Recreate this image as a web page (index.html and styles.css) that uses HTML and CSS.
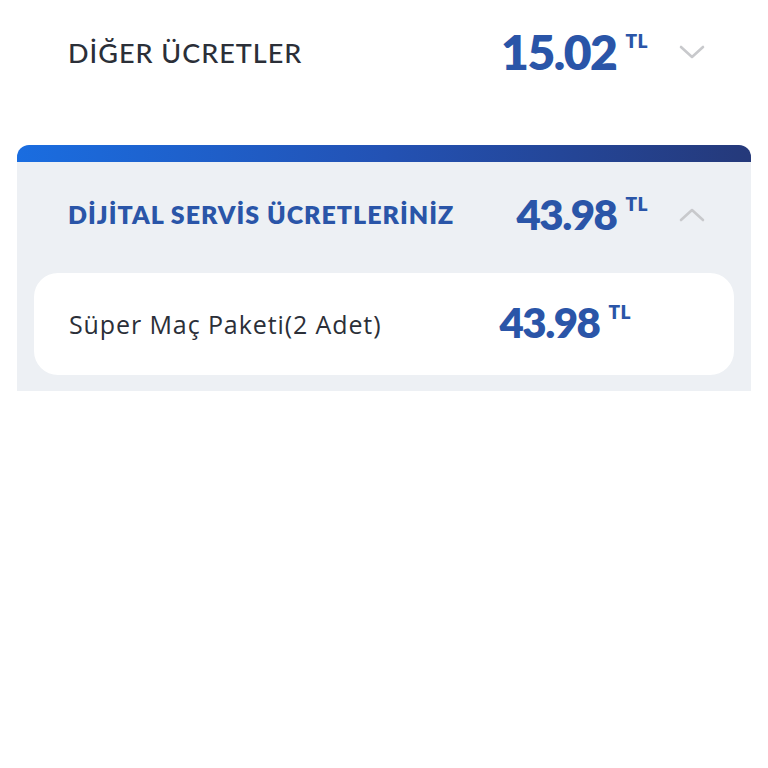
FILE: index.html
```html
<!DOCTYPE html>
<html lang="tr">
<head>
<meta charset="utf-8">
<link rel="stylesheet" href="styles.css">
</head>
<body>
<div class="page">
  <div class="row top-row">
    <div class="label">DİĞER ÜCRETLER</div>
    <div class="amount big"><span class="num">15.02</span><span class="cur">TL</span></div>
    <div class="chev">
      <svg width="26" height="14" viewBox="0 0 26 14"><path d="M2 2 L13 12 L24 2" fill="none" stroke="#c8c9cc" stroke-width="2.6" stroke-linecap="round" stroke-linejoin="round"/></svg>
    </div>
  </div>

  <div class="card">
    <div class="card-bar"></div>
    <div class="card-body">
      <div class="row card-head">
        <div class="label head-label">DİJİTAL SERVİS ÜCRETLERİNİZ</div>
        <div class="amount mid"><span class="num">43.98</span><span class="cur">TL</span></div>
        <div class="chev">
          <svg width="26" height="14" viewBox="0 0 26 14"><path d="M2 12 L13 2 L24 12" fill="none" stroke="#c8c9cc" stroke-width="2.6" stroke-linecap="round" stroke-linejoin="round"/></svg>
        </div>
      </div>
      <div class="item">
        <div class="item-label">Süper Maç Paketi(2 Adet)</div>
        <div class="amount mid"><span class="num">43.98</span><span class="cur">TL</span></div>
      </div>
    </div>
  </div>
</div>
</body>
</html>
```

FILE: styles.css
```css
* { box-sizing: border-box; }
html, body { margin: 0; padding: 0; background: #ffffff; }
body { font-family: "Lato", "Noto Sans", sans-serif; color: #2b2f38; }

.page { padding: 0 17px; }

.row { display: flex; align-items: center; }

.top-row { height: 104px; padding-left: 51px; }

.label { flex: 1; font-size: 27px; letter-spacing: 1px; color: #2b2f38; font-weight: 500; }

.amount { display: flex; align-items: flex-start; color: #2a55a8; font-weight: 800; }
.amount .num { letter-spacing: -1.5px; line-height: 1; }
.amount .cur { font-size: 19px; font-weight: 800; margin-left: 9px; letter-spacing: 0.5px; line-height: 1; }

.amount.big .num { font-size: 48px; }
.amount.big .cur { margin-top: 3px; }
.amount.mid .num { font-size: 42px; }
.amount.mid .cur { margin-top: 1px; }

.chev { width: 103px; padding-left: 31px; display: flex; align-items: center; }

.card { margin-top: 41px; }
.card-bar {
  height: 17px;
  border-radius: 12px 12px 0 0;
  background: linear-gradient(90deg, #1a6de0 0%, #2352b4 50%, #25397a 100%);
}
.card-body { background: #edf0f4; padding: 0 17px 16px; }

.card-head { height: 111px; margin: 0 -17px; padding-left: 51px; padding-bottom: 8px; }
.head-label { color: #2a55a8; font-weight: 800; font-size: 25px; letter-spacing: 1px; }
.card-head .chev svg { margin-top: 2px; }

.item {
  background: #ffffff;
  border-radius: 24px;
  height: 102px;
  display: flex;
  align-items: center;
  padding-left: 35px;
  padding-right: 103px;
}
.item-label { flex: 1; font-family: "Open Sans", "Lato", sans-serif; font-size: 25px; color: #2b2f38; letter-spacing: 0.9px; }
.item .amount { margin-top: -4px; }
```
